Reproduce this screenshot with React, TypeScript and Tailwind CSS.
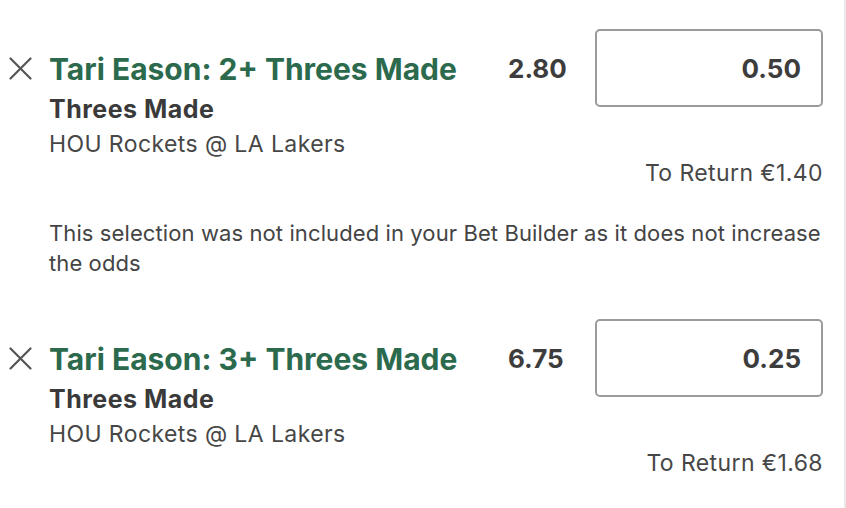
import React from "react";

type Bet = {
  id: number;
  title: string;
  market: string;
  event: string;
  odds: string;
  stake: string;
  toReturn: string;
  note?: string;
};

const BETS: Bet[] = [
  {
    id: 1,
    title: "Tari Eason: 2+ Threes Made",
    market: "Threes Made",
    event: "HOU Rockets @ LA Lakers",
    odds: "2.80",
    stake: "0.50",
    toReturn: "€1.40",
    note: "This selection was not included in your Bet Builder as it does not increase the odds",
  },
  {
    id: 2,
    title: "Tari Eason: 3+ Threes Made",
    market: "Threes Made",
    event: "HOU Rockets @ LA Lakers",
    odds: "6.75",
    stake: "0.25",
    toReturn: "€1.68",
  },
];

function CloseIcon() {
  return (
    <svg width="23" height="23" viewBox="0 0 23 23" fill="none" stroke="#555555" strokeWidth="2.2" strokeLinecap="round">
      <path d="M1.5 1.5 L21.5 21.5" />
      <path d="M21.5 1.5 L1.5 21.5" />
    </svg>
  );
}

function BetRow({ bet }: { bet: Bet }) {
  return (
    <div className="pt-[29px]">
      <div className="flex items-start">
        <button className="w-[49px] shrink-0 pl-[9px] pt-[57px] -mt-[29px] h-[80px] flex items-start">
          <CloseIcon />
        </button>
        <div className="flex-1 min-w-0">
          <div className="mt-[20px] text-[30px] leading-[40px] font-bold text-[#2c6a4e] whitespace-nowrap">
            {bet.title}
          </div>
          <div className="text-[25px] leading-[40px] font-bold text-[#3a3a3a] tracking-[0.5px]">{bet.market}</div>
          <div className="text-[23px] leading-[30px] text-[#474747] tracking-[0.4px]">{bet.event}</div>
        </div>
        <div className="w-[87px] shrink-0 mt-[20px] text-[26px] leading-[40px] font-bold text-[#3d3d3d]">
          {bet.odds}
        </div>
        <div className="w-[228px] h-[78px] shrink-0 border-2 border-[#9b9b9b] rounded-[5px] flex items-center justify-end pr-[20px] text-[26px] font-bold text-[#3d3d3d]">
          {bet.stake}
        </div>
      </div>
      <div className="text-right text-[23px] leading-[28px] text-[#474747] tracking-[0.4px]">To Return {bet.toReturn}</div>
    </div>
  );
}

export default function App() {
  return (
    <div
      className="w-[846px] h-[508px] bg-white flex overflow-hidden"
      style={{ fontFamily: "Inter, 'Noto Sans', sans-serif" }}
    >
      <div className="flex-1 pr-[21px]">
        {BETS.map((bet) => (
          <div key={bet.id}>
            <BetRow bet={bet} />
            {bet.note && (
              <p className="mt-[31px] mb-[12px] pl-[49px] text-[22px] leading-[30px] text-[#444444] tracking-[0.1px]">
                {bet.note}
              </p>
            )}
          </div>
        ))}
      </div>
      <div className="w-[2px] bg-[#e8e8e8]" />
    </div>
  );
}
